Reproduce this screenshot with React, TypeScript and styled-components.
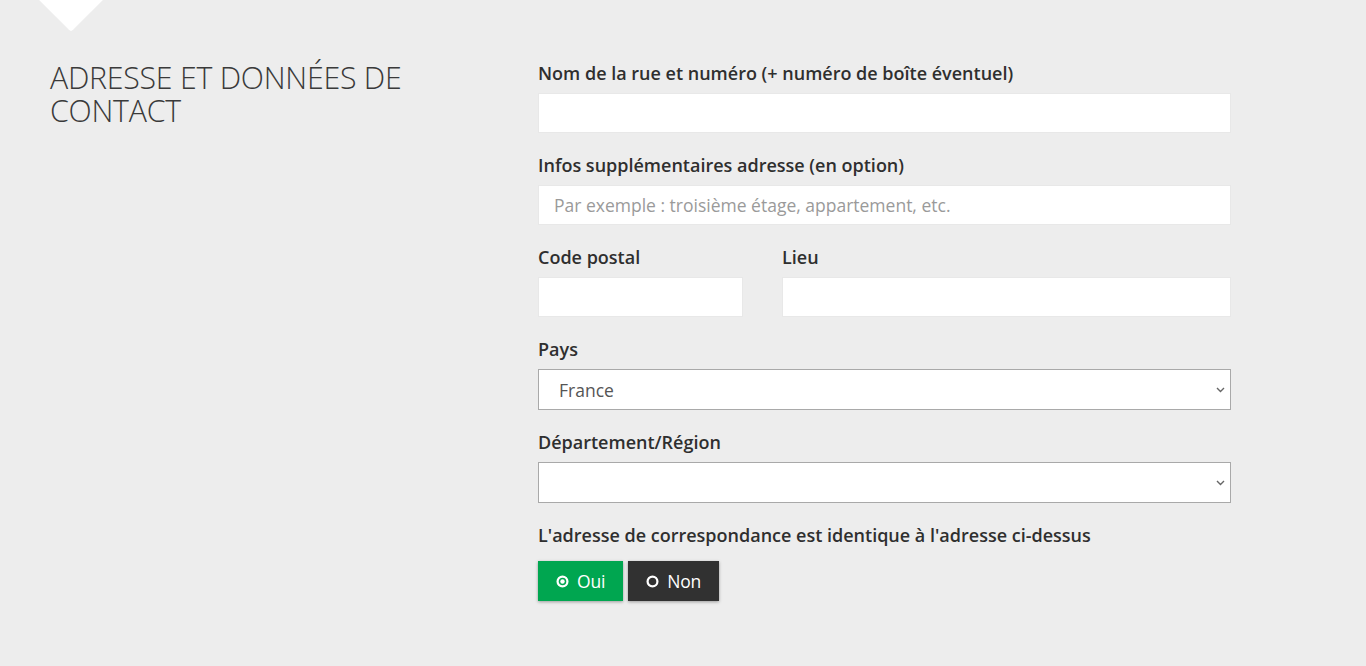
import React from "react";
import styled, { createGlobalStyle } from "styled-components";

const Global = createGlobalStyle`
  html, body { margin: 0; padding: 0; background: #ededed; }
  body { font-family: "Open Sans", "Liberation Sans", sans-serif; color: #333; }
  * { box-sizing: border-box; }
`;

const Page = styled.div`
  position: relative;
  min-height: 666px;
  background: #ededed;
  display: grid;
  grid-template-columns: 488px 693px;
  padding: 61px 0 0 50px;
  overflow: hidden;
`;

const Notch = styled.div`
  position: absolute;
  top: -26px;
  left: 47px;
  width: 48px;
  height: 48px;
  background: #fff;
  transform: rotate(45deg);
  border-radius: 0 0 3px 0;
`;

const Heading = styled.h2`
  margin: 0;
  font-family: "Open Sans", sans-serif;
  font-weight: 300;
  font-size: 30.3px;
  line-height: 33px;
  color: #3a3a3a;
  text-transform: uppercase;
  letter-spacing: -0.25px;
`;

const Form = styled.div`
  display: flex;
  flex-direction: column;
`;

const Field = styled.div<{ $first?: boolean }>`
  display: flex;
  flex-direction: column;
  gap: 8px;
  margin-top: ${(p) => (p.$first ? "0" : "20px")};
  min-width: 0;
`;

const Row = styled.div`
  display: grid;
  grid-template-columns: 205px 449px;
  column-gap: 39px;
`;

const Label = styled.label`
  font-family: "Open Sans", sans-serif;
  font-weight: 600;
  font-size: 18px;
  line-height: 24px;
  color: #2f2f2f;
`;

const Input = styled.input`
  height: 40px;
  width: 100%;
  border: 1px solid #e8e8e8;
  background: #fff;
  padding: 0 15px;
  font-family: "Open Sans", sans-serif;
  font-size: 17.5px;
  color: #333;
  outline: none;
  &::placeholder { color: #9a9a9a; }
`;

const SelectWrap = styled.div`
  position: relative;
  width: 100%;
`;

const Select = styled.select`
  appearance: none;
  -webkit-appearance: none;
  display: block;
  height: 41px;
  width: 100%;
  border: 1px solid #a9a9a9;
  background: #fff;
  padding: 0 30px 0 20px;
  font-family: "Open Sans", sans-serif;
  font-size: 17.5px;
  color: #555;
  outline: none;
  border-radius: 0;
`;

const Chevron = styled.svg`
  position: absolute;
  right: 6px;
  top: 50%;
  margin-top: -3px;
  pointer-events: none;
`;

const Buttons = styled.div`
  display: flex;
  gap: 5px;
  margin-top: 6px;
`;

const Choice = styled.button<{ $active?: boolean }>`
  height: 40px;
  display: inline-flex;
  align-items: center;
  gap: 8px;
  padding: 0 18px 0 18px;
  border: none;
  background: ${(p) => (p.$active ? "#00a650" : "#313131")};
  color: #fff;
  font-family: "Open Sans", sans-serif;
  font-size: 17.5px;
  font-weight: 400;
  letter-spacing: -0.2px;
  box-shadow: 0 1px 3px rgba(0, 0, 0, 0.35);
  cursor: pointer;
`;

const Radio = ({ checked }: { checked?: boolean }) => (
  <svg width="13" height="13" viewBox="0 0 14 14">
    <circle cx="7" cy="7" r="5.3" fill="none" stroke="#fff" strokeWidth="2.4" />
    {checked && <circle cx="7" cy="7" r="2.4" fill="#fff" />}
  </svg>
);

const Dropdown = ({ value, options }: { value: string; options: string[] }) => (
  <SelectWrap>
    <Select defaultValue={value}>
      {options.map((o) => (
        <option key={o} value={o}>
          {o}
        </option>
      ))}
    </Select>
    <Chevron width="9" height="6" viewBox="0 0 9 6">
      <path d="M1 1 L4.5 4.5 L8 1" fill="none" stroke="#666" strokeWidth="1.4" />
    </Chevron>
  </SelectWrap>
);

export default function App() {
  return (
    <>
      <Global />
      <Page>
        <Notch />
        <Heading>
          Adresse et données de
          <br />
          contact
        </Heading>
        <Form>
          <Field $first>
            <Label>Nom de la rue et numéro (+ numéro de boîte éventuel)</Label>
            <Input />
          </Field>
          <Field>
            <Label>Infos supplémentaires adresse (en option)</Label>
            <Input placeholder="Par exemple : troisième étage, appartement, etc." />
          </Field>
          <Row>
            <Field>
              <Label>Code postal</Label>
              <Input />
            </Field>
            <Field>
              <Label>Lieu</Label>
              <Input />
            </Field>
          </Row>
          <Field>
            <Label>Pays</Label>
            <Dropdown value="France" options={["France", "Belgique", "Luxembourg"]} />
          </Field>
          <Field>
            <Label>Département/Région</Label>
            <Dropdown value="" options={[""]} />
          </Field>
          <Field>
            <Label>L'adresse de correspondance est identique à l'adresse ci-dessus</Label>
            <Buttons>
              <Choice $active>
                <Radio checked />
                Oui
              </Choice>
              <Choice>
                <Radio />
                Non
              </Choice>
            </Buttons>
          </Field>
        </Form>
      </Page>
    </>
  );
}
